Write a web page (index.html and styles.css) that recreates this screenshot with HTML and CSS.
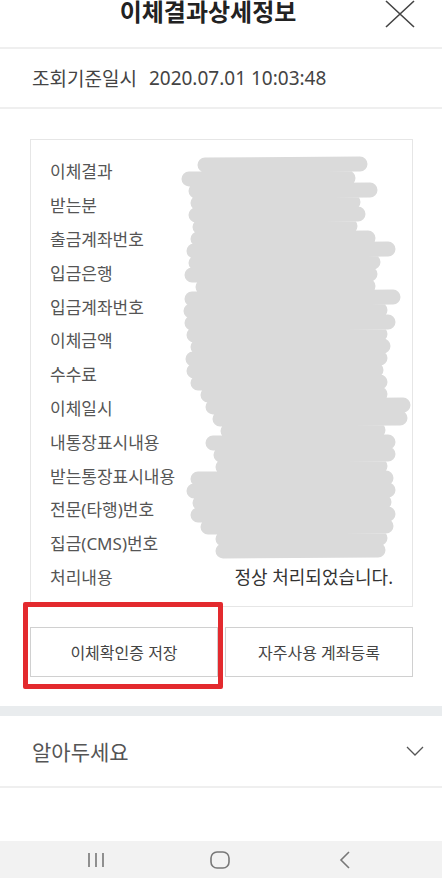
FILE: index.html
```html
<!DOCTYPE html>
<html lang="ko">

<head>
    <meta charset="UTF-8">
    <meta name="viewport" content="width=device-width, initial-scale=1.0">
    <title>이체결과상세정보</title>
    <link rel="stylesheet" href="styles.css">
</head>

<body>
    <div class="screen">
        <div class="header">
            <h1>이체결과상세정보</h1>
            <svg class="close" width="30" height="28" viewBox="0 0 30 28">
                <path d="M1 1 L29 27 M29 1 L1 27" stroke="#444" stroke-width="1.6" fill="none" />
            </svg>
        </div>

        <div class="query-row">
            <span class="query-label">조회기준일시</span>
            <span>2020.07.01 10:03:48</span>
        </div>

        <div class="content">
            <div class="card">
                <div class="item"><span>이체결과</span></div>
                <div class="item"><span>받는분</span></div>
                <div class="item"><span>출금계좌번호</span></div>
                <div class="item"><span>입금은행</span></div>
                <div class="item"><span>입금계좌번호</span></div>
                <div class="item"><span>이체금액</span></div>
                <div class="item"><span>수수료</span></div>
                <div class="item"><span>이체일시</span></div>
                <div class="item"><span>내통장표시내용</span></div>
                <div class="item"><span>받는통장표시내용</span></div>
                <div class="item"><span>전문(타행)번호</span></div>
                <div class="item"><span>집금(CMS)번호</span></div>
                <div class="item"><span>처리내용</span><span class="value">정상 처리되었습니다.</span></div>

                <!-- redaction scribble over the values -->
                <svg class="scribble" width="240" height="410" viewBox="0 0 240 410">
                    <path stroke="#dadada" stroke-width="15" stroke-linecap="round" fill="none"
                        d="M26 11 L181 10 M10 25 L169 24 M17 37 L191 36 M19 49 L174 48 M17 61 L179 60
                           M21 73 L171 72 M19 85 L189 84 M15 97 L209 95 M17 109 L194 108 M13 121 L191 120
                           M24 133 L189 132 M13 145 L214 143 M12 157 L201 156 M13 169 L209 168 M15 181 L201 180
                           M19 193 L204 192 M14 205 L201 204 M15 217 L197 216 M19 229 L201 228 M29 241 L201 240
                           M34 253 L224 251 M41 265 L221 264 M49 277 L199 276 M34 289 L209 288 M42 301 L209 300
                           M44 313 L201 312 M19 325 L207 324 M15 337 L209 336 M21 349 L205 348 M19 361 L209 360
                           M29 373 L207 372 M44 385 L201 384 M44 397 L199 396" />
                </svg>
            </div>

            <div class="buttons">
                <button class="btn">이체확인증 저장</button>
                <button class="btn">자주사용 계좌등록</button>
                <div class="highlight"></div>
            </div>
        </div>

        <div class="band"></div>

        <div class="notice">
            <span>알아두세요</span>
            <svg width="18" height="10" viewBox="0 0 18 10">
                <path d="M1 1 L9 9 L17 1" stroke="#555" stroke-width="1.3" fill="none" />
            </svg>
        </div>

        <div class="spacer"></div>

        <div class="navbar">
            <svg class="nav-recent" width="18" height="16" viewBox="0 0 18 16">
                <path d="M2 1 V15 M9 1 V15 M16 1 V15" stroke="#777" stroke-width="1.6" />
            </svg>
            <svg class="nav-home" width="20" height="18" viewBox="0 0 20 18">
                <rect x="1" y="1" width="18" height="16" rx="6" stroke="#777" stroke-width="1.6" fill="none" />
            </svg>
            <svg class="nav-back" width="12" height="18" viewBox="0 0 12 18">
                <path d="M10 1 L2 9 L10 17" stroke="#777" stroke-width="1.6" fill="none" />
            </svg>
        </div>
    </div>
</body>

</html>
```

FILE: styles.css
```css
body {
    margin: 0;
    padding: 0;
    background-color: #fff;
    font-family: "Noto Sans", "Noto Sans CJK KR", sans-serif;
    color: #444;
}

.screen {
    width: 442px;
    height: 878px;
    display: flex;
    flex-direction: column;
    overflow: hidden;
}

.header {
    height: 47px;
    position: relative;
    border-bottom: 2px solid #efefef;
}

.header h1 {
    margin: 0;
    padding-right: 26px;
    text-align: center;
    font-size: 24px;
    font-weight: bold;
    color: #222;
    line-height: 24px;
}

.close {
    position: absolute;
    right: 27px;
    top: 0;
}

.query-row {
    height: 58px;
    display: flex;
    align-items: center;
    padding-left: 32px;
    font-size: 19px;
    color: #444;
    border-bottom: 2px solid #efefef;
}

.query-label {
    margin-right: 12px;
}

.content {
    padding: 30px 29px 29px 30px;
}

.card {
    position: relative;
    border: 1px solid #e6e6e6;
    padding: 14px 19px 13px 19px;
}

.item {
    height: 33.8px;
    display: flex;
    align-items: center;
    justify-content: space-between;
    font-size: 17px;
    color: #555;
}

.item .value {
    font-size: 18px;
    color: #333;
}

.scribble {
    position: absolute;
    left: 148px;
    top: 14px;
}

.buttons {
    position: relative;
    display: flex;
    gap: 7px;
    margin-top: 20px;
}

.btn {
    flex: 1;
    height: 50px;
    background: #fff;
    border: 1px solid #d0d0d0;
    font-family: inherit;
    font-size: 16px;
    color: #444;
    padding: 0;
}

.highlight {
    position: absolute;
    left: -7px;
    top: -25px;
    width: 190px;
    height: 77px;
    border: 5px solid #e32a2e;
    border-radius: 2px;
}

.band {
    height: 10px;
    background-color: #e9ecee;
}

.notice {
    height: 70px;
    display: flex;
    align-items: center;
    justify-content: space-between;
    padding: 0 18px 0 32px;
    font-size: 21px;
    color: #555;
    border-bottom: 2px solid #efefef;
}

.spacer {
    flex: 1;
}

.navbar {
    height: 37px;
    background-color: #f2f2f2;
    display: flex;
    align-items: center;
    padding-left: 87px;
}

.nav-home {
    margin-left: 105px;
}

.nav-back {
    margin-left: 109px;
}
```
